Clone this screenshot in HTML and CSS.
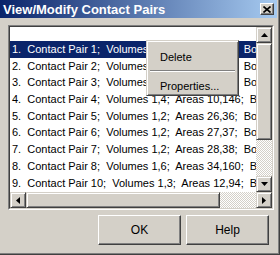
FILE: index.html
```html
<!DOCTYPE html>
<html lang="en">
<head>
    <meta charset="UTF-8">
    <title>View/Modify Contact Pairs</title>
    <link rel="stylesheet" href="styles.css">
</head>
<body>
    <div class="dialog">
        <div class="titlebar">
            <span class="title">View/Modify Contact Pairs</span>
            <span class="close-btn">
                <svg width="8" height="7" viewBox="0 0 8 7"><path d="M0.5 0.5L7.5 6.5M7.5 0.5L0.5 6.5" stroke="#000" stroke-width="1.6"/></svg>
            </span>
        </div>
        <div class="content">
            <div class="listbox">
                <div class="list-inner">
                    <div class="list-main">
                        <div class="rows">
                            <div class="row selected">1.  Contact Pair 1;  Volumes 1,2;  Areas 7,17;    Bonded</div>
                            <div class="row">2.  Contact Pair 2;  Volumes 1,2;  Areas 8,18;    Bonded</div>
                            <div class="row">3.  Contact Pair 3;  Volumes 1,2;  Areas 9,19;    Bonded</div>
                            <div class="row">4.  Contact Pair 4;  Volumes 1,4;  Areas 10,146;  Bonded</div>
                            <div class="row">5.  Contact Pair 5;  Volumes 1,2;  Areas 26,36;  Bonded</div>
                            <div class="row">6.  Contact Pair 6;  Volumes 1,2;  Areas 27,37;  Bonded</div>
                            <div class="row">7.  Contact Pair 7;  Volumes 1,2;  Areas 28,38;  Bonded</div>
                            <div class="row">8.  Contact Pair 8;  Volumes 1,6;  Areas 34,160;  Bonded</div>
                            <div class="row">9.  Contact Pair 10;  Volumes 1,3;  Areas 12,94;  Bonded</div>
                        </div>
                        <div class="vscroll">
                            <div class="sb-btn">
                                <svg width="7" height="4" viewBox="0 0 7 4"><path d="M3.5 0L7 4H0z"/></svg>
                            </div>
                            <div class="v-thumb"></div>
                            <div class="track"></div>
                            <div class="sb-btn">
                                <svg width="7" height="4" viewBox="0 0 7 4"><path d="M0 0h7L3.5 4z"/></svg>
                            </div>
                        </div>
                    </div>
                    <div class="hscroll">
                        <div class="sb-btn">
                            <svg width="4" height="7" viewBox="0 0 4 7"><path d="M0 3.5L4 0v7z"/></svg>
                        </div>
                        <div class="h-thumb"></div>
                        <div class="track"></div>
                        <div class="sb-btn">
                            <svg width="4" height="7" viewBox="0 0 4 7"><path d="M0 0l4 3.5L0 7z"/></svg>
                        </div>
                    </div>
                </div>
            </div>
            <div class="buttons">
                <button class="btn">OK</button>
                <button class="btn">Help</button>
            </div>
        </div>
        <div class="context-menu">
            <div class="menu-item">Delete</div>
            <div class="menu-sep"></div>
            <div class="menu-item">Properties...</div>
        </div>
    </div>
</body>
</html>
```

FILE: styles.css
```css
body {
    margin: 0;
    background: #d4d0c8;
    font-family: "Liberation Sans", Arial, sans-serif;
}
.dialog {
    position: relative;
    width: 280px;
    height: 255px;
    box-sizing: border-box;
    background: #d4d0c8;
    border-right: 1px solid #404040;
    border-bottom: 1px solid #404040;
    box-shadow: inset -1px -1px #808080;
    padding: 0 2px 2px 0;
    display: flex;
    flex-direction: column;
}
.titlebar {
    height: 18px;
    background: linear-gradient(to right, #0a246a, #a6caf0);
    display: flex;
    align-items: center;
    justify-content: space-between;
    padding: 0 3px 0 3px;
}
.title {
    color: #fff;
    font-weight: bold;
    font-size: 13px;
}
.close-btn {
    width: 14px;
    height: 12px;
    box-sizing: border-box;
    background: #d4d0c8;
    border: 1px solid;
    border-color: #fff #404040 #404040 #fff;
    box-shadow: inset -1px -1px #808080;
    display: flex;
    align-items: center;
    justify-content: center;
}
.content {
    flex: 1;
    padding: 7px 3px 7px 8px;
    display: flex;
    flex-direction: column;
}
.listbox {
    height: 185px;
    box-sizing: border-box;
    border: 1px solid;
    border-color: #808080 #fff #fff #808080;
}
.list-inner {
    height: 100%;
    box-sizing: border-box;
    border: 1px solid;
    border-color: #404040 #d4d0c8 #d4d0c8 #404040;
    background: #fff;
    display: flex;
    flex-direction: column;
}
.list-main {
    height: 165px;
    display: flex;
}
.rows {
    flex: 1;
    overflow: hidden;
    padding-top: 14px;
}
.row {
    height: 16.7px;
    line-height: 16.7px;
    padding-left: 2px;
    font-size: 11px;
    white-space: pre;
    color: #000;
}
.row.selected {
    background: #0a246a;
    color: #fff;
}
.vscroll {
    width: 16px;
    display: flex;
    flex-direction: column;
}
.hscroll {
    height: 16px;
    display: flex;
}
.sb-btn, .v-thumb, .h-thumb {
    box-sizing: border-box;
    background: #d4d0c8;
    border: 1px solid;
    border-color: #d4d0c8 #404040 #404040 #d4d0c8;
    box-shadow: inset 1px 1px #fff, inset -1px -1px #808080;
}
.sb-btn {
    width: 16px;
    height: 16px;
    display: flex;
    align-items: center;
    justify-content: center;
}
.v-thumb {
    height: 97px;
}
.h-thumb {
    width: 194px;
}
.track {
    flex: 1;
    background: repeating-conic-gradient(#fff 0 25%, #d4d0c8 0 50%) 0 0 / 2px 2px;
}
.buttons {
    margin-top: 5px;
    padding-right: 5px;
    display: flex;
    justify-content: flex-end;
    gap: 5px;
}
.btn {
    width: 83px;
    height: 30px;
    padding: 0;
    background: #d4d0c8;
    border: 1px solid;
    border-color: #fff #404040 #404040 #fff;
    box-shadow: inset -1px -1px #808080;
    font-family: "Liberation Sans", Arial, sans-serif;
    font-size: 12px;
    color: #000;
}
.context-menu {
    position: absolute;
    left: 146px;
    top: 40px;
    width: 93px;
    box-sizing: border-box;
    background: #d4d0c8;
    border: 1px solid;
    border-color: #d4d0c8 #404040 #404040 #d4d0c8;
    box-shadow: inset 1px 1px #fff, inset -1px -1px #808080;
    padding: 7px 2px 0;
}
.menu-item {
    height: 18px;
    line-height: 18px;
    padding-left: 11px;
    font-size: 11px;
}
.menu-sep {
    margin: 4px 1px 5px;
    border-top: 1px solid #808080;
    border-bottom: 1px solid #fff;
}
```
